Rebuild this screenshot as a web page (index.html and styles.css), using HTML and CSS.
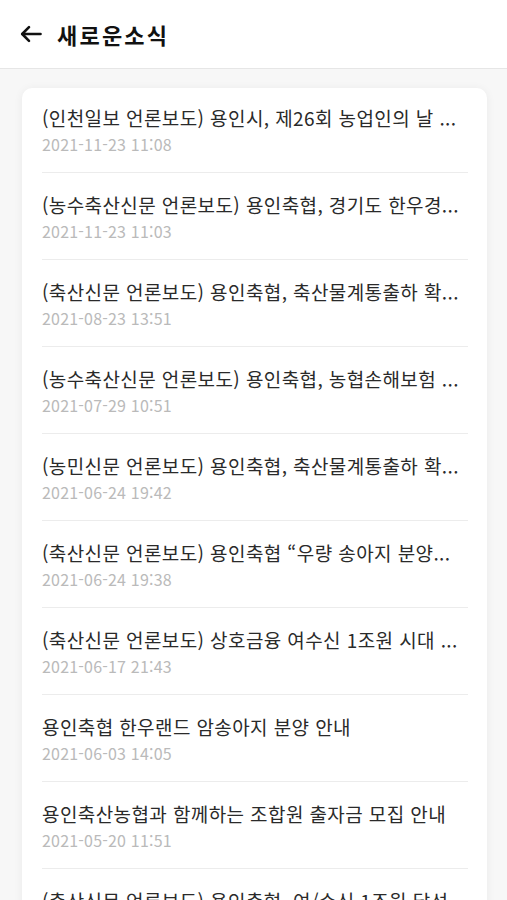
FILE: index.html
```html
<!DOCTYPE html>
<html lang="ko">
<head>
  <meta charset="UTF-8" />
  <meta name="viewport" content="width=device-width, initial-scale=1.0"/>
  <title>새로운소식</title>
  <link rel="stylesheet" href="styles.css">
</head>
<body>

  <header class="top-bar">
    <button class="back" aria-label="뒤로">
      <svg width="22" height="18" viewBox="0 0 22 18" fill="none" stroke="#111" stroke-width="2.6" stroke-linecap="round" stroke-linejoin="round">
        <path d="M20.5 9H2.5"/>
        <path d="M9 2.2L2.2 9 9 15.8"/>
      </svg>
    </button>
    <h1>새로운소식</h1>
  </header>

  <main class="content">
    <ul class="news-card">
      <li class="news-item">
        <p class="news-title">(인천일보 언론보도) 용인시, 제26회 농업인의 날 ...</p>
        <span class="news-date">2021-11-23 11:08</span>
      </li>
      <li class="news-item">
        <p class="news-title">(농수축산신문 언론보도) 용인축협, 경기도 한우경...</p>
        <span class="news-date">2021-11-23 11:03</span>
      </li>
      <li class="news-item">
        <p class="news-title">(축산신문 언론보도) 용인축협, 축산물계통출하 확...</p>
        <span class="news-date">2021-08-23 13:51</span>
      </li>
      <li class="news-item">
        <p class="news-title">(농수축산신문 언론보도) 용인축협, 농협손해보험 ...</p>
        <span class="news-date">2021-07-29 10:51</span>
      </li>
      <li class="news-item">
        <p class="news-title">(농민신문 언론보도) 용인축협, 축산물계통출하 확...</p>
        <span class="news-date">2021-06-24 19:42</span>
      </li>
      <li class="news-item">
        <p class="news-title">(축산신문 언론보도) 용인축협 “우량 송아지 분양...</p>
        <span class="news-date">2021-06-24 19:38</span>
      </li>
      <li class="news-item">
        <p class="news-title">(축산신문 언론보도) 상호금융 여수신 1조원 시대 ...</p>
        <span class="news-date">2021-06-17 21:43</span>
      </li>
      <li class="news-item">
        <p class="news-title">용인축협 한우랜드 암송아지 분양 안내</p>
        <span class="news-date">2021-06-03 14:05</span>
      </li>
      <li class="news-item">
        <p class="news-title">용인축산농협과 함께하는 조합원 출자금 모집 안내</p>
        <span class="news-date">2021-05-20 11:51</span>
      </li>
      <li class="news-item">
        <p class="news-title">(축산신문 언론보도) 용인축협, 여/수신 1조원 달성</p>
        <span class="news-date">2021-05-11 10:20</span>
      </li>
    </ul>
  </main>

</body>
</html>
```

FILE: styles.css
```css
* {
  margin: 0;
  padding: 0;
  box-sizing: border-box;
}

body, html {
  height: 100%;
  overflow: hidden;
  font-family: "Noto Sans CJK KR", "Noto Sans", sans-serif;
}

body {
  background: #f7f7f7;
  color: #2a2a2a;
}

/* 상단 바 */
.top-bar {
  height: 69px;
  display: flex;
  align-items: center;
  gap: 15px;
  padding: 0 20px;
  background: #fff;
  border-bottom: 1px solid #e6e6e6;
}

.back {
  display: flex;
  border: none;
  background: none;
  padding: 0;
}

.top-bar h1 {
  font-size: 22px;
  font-weight: 700;
  letter-spacing: 2.2px;
  color: #111;
  margin-top: -1px;
}

/* 소식 목록 */
.content {
  padding: 19px 20px 0 22px;
}

.news-card {
  list-style: none;
  background: #fff;
  border-radius: 10px;
  padding: 0 19px 0 20px;
  box-shadow: 0 1px 10px rgba(0, 0, 0, 0.06);
}

.news-item {
  padding: 17px 0 17px;
  border-bottom: 1px solid #ececec;
}

.news-item + .news-item {
  padding-top: 19px;
}

.news-title {
  font-size: 19px;
  line-height: 26px;
  letter-spacing: 0.4px;
  color: #2a2a2a;
  white-space: nowrap;
  overflow: hidden;
}

.news-date {
  display: block;
  margin-top: 2px;
  font-size: 16px;
  line-height: 22px;
  letter-spacing: 0.2px;
  color: #bababa;
}
```
